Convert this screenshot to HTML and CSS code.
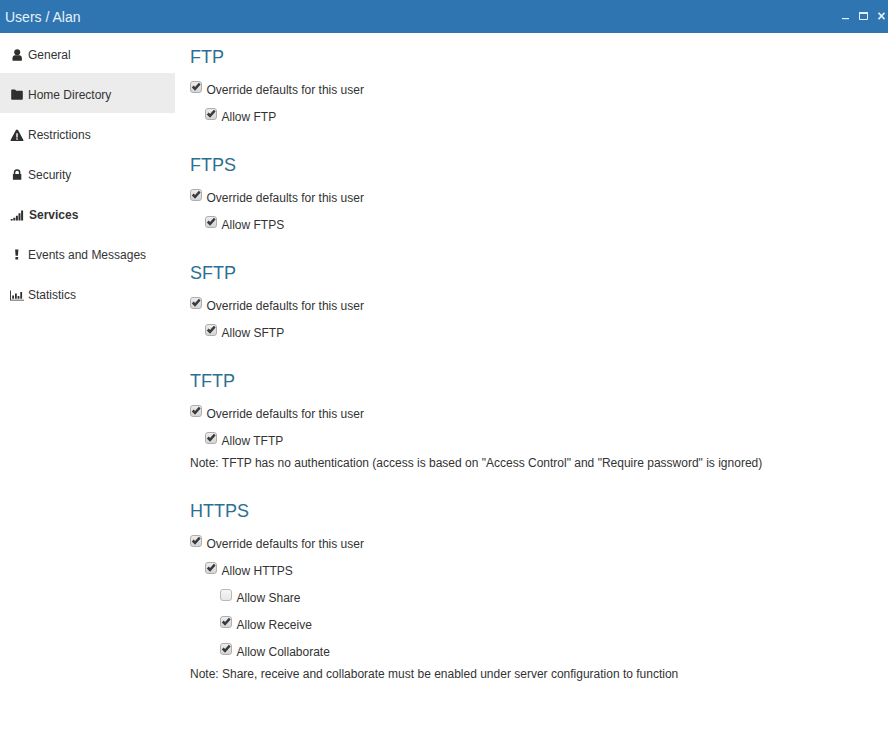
FILE: index.html
```html
<!DOCTYPE html>
<html lang="en">
<head>
<meta charset="utf-8">
<title>Users / Alan</title>
<link rel="stylesheet" href="styles.css">
</head>
<body>
<svg class="defs" width="0" height="0" aria-hidden="true">
  <symbol id="check" viewBox="0 0 13 13"><path d="M2 7 L4 5 L5.500 6.500 L9.600 2 L11.500 3.900 L5.500 10.500 Z" fill="#3a3a3a"/></symbol>
</svg>
<header class="titlebar">
  <span class="title">Users / Alan</span>
  <div class="winctl">
    <svg width="7" height="8" viewBox="0 0 7 8"><rect x="0" y="6" width="7" height="1.200" fill="#e6eef6"/></svg>
    <svg width="9" height="8" viewBox="0 0 9 8"><path d="M.5 .5h8v7h-8z" fill="none" stroke="#e6eef6"/><rect x="0" y="0" width="9" height="2" fill="#e6eef6"/></svg>
    <svg width="7" height="8" viewBox="0 0 7 8"><path d="M.5 .8l6 6.400M6.500 .8l-6 6.400" stroke="#e6eef6" stroke-width="1.700"/></svg>
  </div>
</header>
<div class="shell">
  <nav class="sidebar">
    <a class="item"><svg class="ico" viewBox="0 0 14 14"><circle cx="7.200" cy="4.300" r="3"/><path d="M2.500 12.700V10C2.500 8.300 3.700 7.200 5 7.200h4.400c1.300 0 2.500 1.100 2.500 2.800v2.700z"/></svg><span>General</span></a>
    <a class="item active"><svg class="ico" viewBox="0 0 14 14"><path d="M1.200 2.500c0-.7.400-1 1-1h2.800l1.200 1.300h5.600c.6 0 1 .4 1 1v6.900c0 .6-.4 1-1 1H2.200c-.6 0-1-.4-1-1z"/></svg><span>Home Directory</span></a>
    <a class="item"><svg class="ico" viewBox="0 0 14 14"><path fill-rule="evenodd" d="M6.100 1.700h1.800L13.400 12v1H.6v-1zM6.300 5.300v4.200h1.400V5.300zM6.300 10.300v1.500h1.400v-1.500z"/></svg><span>Restrictions</span></a>
    <a class="item"><svg class="ico" viewBox="0 0 14 14"><path fill-rule="evenodd" d="M3.800 6V4.600a3.300 3.300 0 0 1 6.600 0V6h.9v5.700H2.900V6zM5.300 6h3.600V4.600a1.800 1.800 0 0 0-3.600 0z"/></svg><span>Security</span></a>
    <a class="item current"><svg class="ico" viewBox="0 0 14 14"><path d="M.7 11h2v1.500h-2zM3.300 9.800h2v2.700h-2zM5.900 7.800h2v4.700h-2zM8.500 5.200h2v7.300h-2zM11.100 2.500h2v10h-2z"/></svg><span>Services</span></a>
    <a class="item"><svg class="ico" viewBox="0 0 14 14"><path d="M5.100 1.500h3.300l-.5 6.300H5.600zM5.400 9h2.700v2.500H5.400z"/></svg><span>Events and Messages</span></a>
    <a class="item"><svg class="ico" viewBox="0 0 14 14"><path d="M0 2.500h.9v9.200H14v.9H0zM2.200 7.500h1.800v3.300H2.200zM5 5.500h1.800v5.300H5zM7.600 8h1.800v2.800H7.600zM10.300 4h1.800v6.800h-1.800z"/></svg><span>Statistics</span></a>
  </nav>
  <main class="content">
    <section class="group">
      <h2>FTP</h2>
      <div class="row"><span class="box"><svg><use href="#check"/></svg></span>Override defaults for this user</div>
      <div class="row l1"><span class="box"><svg><use href="#check"/></svg></span>Allow FTP</div>
    </section>
    <section class="group">
      <h2>FTPS</h2>
      <div class="row"><span class="box"><svg><use href="#check"/></svg></span>Override defaults for this user</div>
      <div class="row l1"><span class="box"><svg><use href="#check"/></svg></span>Allow FTPS</div>
    </section>
    <section class="group">
      <h2>SFTP</h2>
      <div class="row"><span class="box"><svg><use href="#check"/></svg></span>Override defaults for this user</div>
      <div class="row l1"><span class="box"><svg><use href="#check"/></svg></span>Allow SFTP</div>
    </section>
    <section class="group">
      <h2>TFTP</h2>
      <div class="row"><span class="box"><svg><use href="#check"/></svg></span>Override defaults for this user</div>
      <div class="row l1"><span class="box"><svg><use href="#check"/></svg></span>Allow TFTP</div>
      <p class="note">Note: TFTP has no authentication (access is based on "Access Control" and "Require password" is ignored)</p>
    </section>
    <section class="group">
      <h2>HTTPS</h2>
      <div class="row"><span class="box"><svg><use href="#check"/></svg></span>Override defaults for this user</div>
      <div class="row l1"><span class="box"><svg><use href="#check"/></svg></span>Allow HTTPS</div>
      <div class="row l2"><span class="box empty"></span>Allow Share</div>
      <div class="row l2"><span class="box"><svg><use href="#check"/></svg></span>Allow Receive</div>
      <div class="row l2"><span class="box"><svg><use href="#check"/></svg></span>Allow Collaborate</div>
      <p class="note">Note: Share, receive and collaborate must be enabled under server configuration to function</p>
    </section>
  </main>
</div>
</body>
</html>
```
FILE: styles.css
```css
* { box-sizing: border-box; }
html, body { margin: 0; padding: 0; height: 100%; }
body {
  font-family: "Liberation Sans", Arial, sans-serif;
  font-size: 12px;
  color: #333;
  background: #fff;
  overflow: hidden;
}
.defs { display: block; height: 0; }
.titlebar {
  height: 33px;
  background: #2e75b1;
  color: #e8f2fa;
  display: flex;
  align-items: center;
  justify-content: space-between;
  padding: 0 3px 0 5px;
}
.title { font-size: 14px; }
.winctl { display: flex; align-items: center; gap: 10px; padding-bottom: 1px; }
.shell { display: flex; }
.sidebar { width: 175px; flex: none; }
.item {
  height: 40px;
  display: flex;
  align-items: center;
  padding: 3px 0 0 10px;
  gap: 4px;
  color: #333;
}
.item.active { background: #ececec; }
.item.current { font-weight: 700; gap: 5px; }
.ico { width: 14px; height: 14px; fill: #2f2f2f; flex: none; }
.content { padding: 8px 0 0 15px; flex: 1; }
.group { margin-bottom: 19px; }
h2 {
  margin: 0;
  height: 35px;
  line-height: 32px;
  font-size: 18px;
  font-weight: 400;
  color: #2b6f93;
}
.row {
  height: 27px;
  display: flex;
  align-items: center;
  gap: 4.500px;
}
.l1 { padding-left: 15px; }
.l2 { padding-left: 30px; }
.box {
  width: 12px;
  height: 12px;
  margin-top: -5px;
  flex: none;
  border: 1px solid #aeaeae;
  border-radius: 3px;
  background: linear-gradient(#ececec, #d6d6d6);
  position: relative;
  display: block;
}
.box.empty { background: linear-gradient(#f6f6f6, #e6e6e6); border-color: #b8b8b8; }
.box svg { position: absolute; left: -1px; top: -1px; width: 12px; height: 12px; }
.note { margin: 0; height: 22px; line-height: 18px; }
```
